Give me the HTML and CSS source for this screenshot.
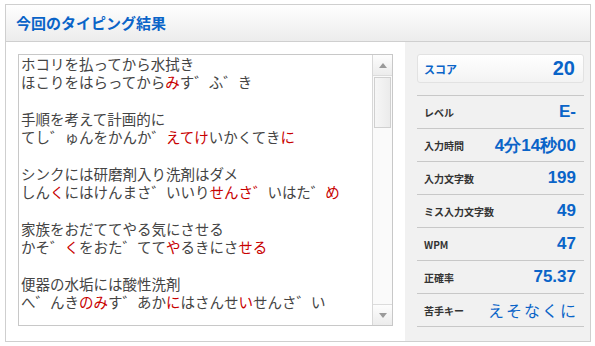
FILE: index.html
```html
<!DOCTYPE html>
<html lang="ja">
<head>
    <meta charset="UTF-8">
    <title>今回のタイピング結果</title>
    <link rel="stylesheet" href="styles.css">
</head>
<body>
    <div class="result">
        <div class="result-head">今回のタイピング結果</div>
        <div class="result-body">
            <div class="log-wrap">
                <div class="log">
                    <div class="log-text">
                        <p>ホコリを払ってから水拭き<br>ほこりをはらってから<span class="miss">み</span>す゛ふ゛き</p>
                        <p>手順を考えて計画的に<br>てし゛ゅんをかんか゛<span class="miss">えてけ</span>いかくてき<span class="miss">に</span></p>
                        <p>シンクには研磨剤入り洗剤はダメ<br>しん<span class="miss">く</span>にはけんまさ゛いいり<span class="miss">せんさ゛</span>いはた゛<span class="miss">め</span></p>
                        <p>家族をおだててやる気にさせる<br>かそ゛<span class="miss">く</span>をおた゛てて<span class="miss">や</span>るきにさ<span class="miss">せる</span></p>
                        <p>便器の水垢には酸性洗剤<br>へ゛んき<span class="miss">のみ</span>す゛あか<span class="miss">に</span>はさんせ<span class="miss">い</span>せんさ゛い</p>
                    </div>
                    <div class="scrollbar">
                        <div class="sb-btn"><span class="arrow-up"></span></div>
                        <div class="sb-track"><div class="sb-thumb"></div></div>
                        <div class="sb-btn"><span class="arrow-down"></span></div>
                    </div>
                </div>
            </div>
            <div class="stats">
                <div class="score">
                    <span class="score-label">スコア</span>
                    <span class="score-value">20</span>
                </div>
                <ul class="stat-list">
                    <li><span class="stat-label">レベル</span><span class="stat-value">E-</span></li>
                    <li><span class="stat-label">入力時間</span><span class="stat-value">4分14秒00</span></li>
                    <li><span class="stat-label">入力文字数</span><span class="stat-value">199</span></li>
                    <li><span class="stat-label">ミス入力文字数</span><span class="stat-value">49</span></li>
                    <li><span class="stat-label">WPM</span><span class="stat-value">47</span></li>
                    <li><span class="stat-label">正確率</span><span class="stat-value">75.37</span></li>
                    <li><span class="stat-label">苦手キー</span><span class="stat-keys">えそなくに</span></li>
                </ul>
            </div>
        </div>
    </div>
</body>
</html>
```

FILE: styles.css
```css
body {
    margin: 0;
    background: #fff;
    font-family: "Noto Sans CJK JP", "Liberation Sans", sans-serif;
}
.result {
    margin: 4px 0 0 5px;
    width: 584px;
    height: 336px;
    border: 1px solid #cfcfcf;
    display: flex;
    flex-direction: column;
}
.result-head {
    height: 36px;
    border-bottom: 1px solid #cfcfcf;
    background: linear-gradient(#fefefe, #ececec);
    color: #0a64c8;
    font-weight: bold;
    font-size: 15px;
    line-height: 36px;
    padding-left: 10px;
}
.result-body {
    flex: 1;
    display: flex;
}
.log-wrap {
    width: 375px;
    padding: 12px 12px 14px 12px;
}
.log {
    height: 270px;
    border: 1px solid #c8c8c8;
    display: flex;
}
.log-text {
    flex: 1;
    padding: 0 0 0 2px;
    color: #444;
    font-size: 14.5px;
    line-height: 18.3px;
    overflow: hidden;
}
.log-text p {
    margin: 0 0 18.3px 0;
}
.miss {
    color: #c80000;
}
.scrollbar {
    width: 19px;
    border-left: 1px solid #d8d8d8;
    display: flex;
    flex-direction: column;
    background: #fafafa;
}
.sb-btn {
    height: 20px;
    background: linear-gradient(#fdfdfd, #ececec);
    border: 1px solid #dcdcdc;
    border-width: 0 0 1px 0;
    display: flex;
    align-items: center;
    justify-content: center;
}
.sb-btn:last-child {
    border-width: 1px 0 0 0;
}
.arrow-up {
    border: 4px solid transparent;
    border-top: 0;
    border-bottom: 5px solid #9a9a9a;
}
.arrow-down {
    border: 4px solid transparent;
    border-bottom: 0;
    border-top: 5px solid #9a9a9a;
}
.sb-track {
    flex: 1;
    padding: 1px 1px;
}
.sb-thumb {
    height: 49px;
    border: 1px solid #d0d0d0;
    background: linear-gradient(90deg, #f6f6f6, #ebebeb);
}
.stats {
    flex: 1;
    background: #f1f1f1;
    padding: 12px 6px 0 12px;
}
.score {
    height: 27px;
    border: 1px solid #e2e2e2;
    border-radius: 3px;
    background: linear-gradient(#ffffff, #f3f3f3);
    display: flex;
    align-items: center;
    justify-content: space-between;
    padding: 0 8px 0 6px;
}
.score-label {
    color: #0a64c8;
    font-size: 11px;
    font-weight: bold;
}
.score-value {
    color: #0a64c8;
    font-family: "Liberation Sans", sans-serif;
    font-size: 20px;
    font-weight: bold;
}
.stat-list {
    list-style: none;
    margin: 12px 0 0 0;
    padding: 0;
    border-top: 1px solid #c8c8c8;
}
.stat-list li {
    height: 32px;
    border-bottom: 1px solid #c8c8c8;
    display: flex;
    align-items: center;
    justify-content: space-between;
    padding: 0 8px 0 7px;
}
.stat-label {
    color: #333;
    font-size: 10px;
    font-weight: bold;
}
.stat-value {
    color: #0a64c8;
    font-family: "Liberation Sans", sans-serif;
    font-size: 17px;
    font-weight: bold;
}
.stat-keys {
    color: #0a64c8;
    font-size: 16px;
    letter-spacing: 2px;
    margin-right: -2px;
}
```
